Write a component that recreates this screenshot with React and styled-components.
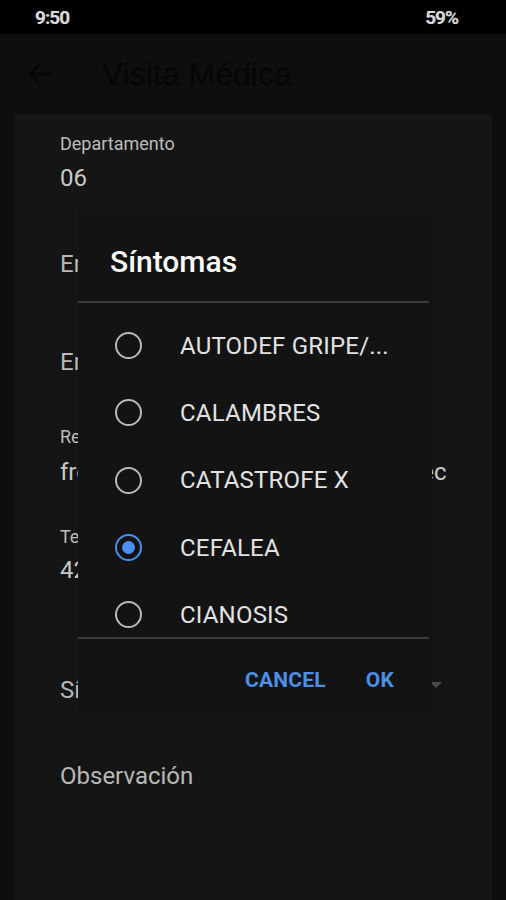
import React from "react";
import styled, { createGlobalStyle } from "styled-components";

const Global = createGlobalStyle`
  html, body { margin: 0; padding: 0; background: #0e0e0e; }
  body { font-family: Roboto, "Noto Sans", "Liberation Sans", sans-serif; }
  * { box-sizing: border-box; }
`;

const Screen = styled.div`
  position: relative;
  width: 506px;
  height: 900px;
  overflow: hidden;
  background: #0e0e0e;
  display: flex;
  flex-direction: column;
`;

const StatusBar = styled.div`
  height: 34px;
  background: #000;
  display: flex;
  align-items: center;
  justify-content: space-between;
  padding: 0 48px 0 35px;
  font-size: 19px;
  font-weight: 700;
  color: #d8d8d8;
  letter-spacing: -1px;
  text-shadow: 0 0 1px #555;
`;

const AppBar = styled.div`
  height: 80px;
  display: flex;
  align-items: center;
  padding-left: 27px;
  gap: 49px;
  background: #0e0e0e;
`;

const Title = styled.div`
  font-size: 32px;
  color: #060606;
  font-family: "Liberation Sans", Arial, sans-serif;
`;

const Card = styled.div`
  flex: 1;
  margin: 0 14px 0 15px;
  background: #151515;
  padding: 20px 0 0 45px;
  display: flex;
  flex-direction: column;
`;

const Field = styled.div`
  display: flex;
  flex-direction: column;
  gap: ${(p) => p.$gap ?? 8}px;
  margin-top: ${(p) => p.$top ?? 0}px;
  position: relative;
`;

const Label = styled.div`
  font-size: 18px;
  color: #bdbdbd;
  line-height: 20px;
`;

const Value = styled.div`
  font-size: 24px;
  color: #c8c8c8;
  line-height: 26px;
  white-space: nowrap;
`;

const Placeholder = styled.div`
  font-size: 24px;
  color: #b8b8b8;
  line-height: 26px;
  white-space: nowrap;
`;

const SelectRow = styled.div`
  display: flex;
  align-items: flex-start;
  justify-content: space-between;
  padding-right: 50px;
  margin-top: ${(p) => p.$top}px;
`;

const Caret = styled.div`
  width: 0;
  height: 0;
  margin-top: 5px;
  border-left: 6px solid transparent;
  border-right: 6px solid transparent;
  border-top: 6px solid #4a4a4a;
`;

const Dialog = styled.div`
  position: absolute;
  left: 78px;
  top: 210px;
  width: 354px;
  height: 505px;
  background: #131313;
  display: flex;
  flex-direction: column;
`;

const DialogTitle = styled.div`
  height: 91px;
  display: flex;
  align-items: center;
  padding: 12px 0 0 32px;
  font-size: 30px;
  font-weight: 500;
  color: #fafafa;
`;

const Divider = styled.div`
  height: 2px;
  margin-right: 3px;
  background: #3c3c3c;
`;

const List = styled.div`
  height: 334px;
  overflow: hidden;
  padding-top: 9px;
`;

const Item = styled.div`
  height: 67.3px;
  display: flex;
  align-items: center;
  padding-left: 37px;
  gap: 38px;
  font-size: 24px;
  color: #e2e2e2;
  letter-spacing: 0.2px;
  white-space: nowrap;
`;

const Radio = styled.div`
  width: 27px;
  height: 27px;
  flex: none;
  border-radius: 50%;
  border: 2.5px solid ${(p) => (p.$on ? "#4a90f0" : "#b9b9b9")};
  display: flex;
  align-items: center;
  justify-content: center;
  &::after {
    content: "";
    width: 13px;
    height: 13px;
    border-radius: 50%;
    background: #4a90f0;
    display: ${(p) => (p.$on ? "block" : "none")};
  }
`;

const Actions = styled.div`
  flex: 1;
  display: flex;
  align-items: flex-start;
  justify-content: flex-end;
  padding: 29px 38px 0 0;
  gap: 40px;
`;

const Action = styled.div`
  font-size: 21px;
  font-weight: 700;
  color: #4b8fe6;
  letter-spacing: 0.2px;
`;

const items = ["AUTODEF GRIPE/...", "CALAMBRES", "CATASTROFE X", "CEFALEA", "CIANOSIS", "CONVULSIONES"];

export default function App() {
  return (
    <>
      <Global />
      <Screen>
        <StatusBar>
          <span>9:50</span>
          <span>59%</span>
        </StatusBar>
        <AppBar>
          <svg width="26" height="22" viewBox="0 0 26 22">
            <path d="M24 11H3M12 2L3 11l9 9" fill="none" stroke="#060606" strokeWidth="2.6" />
          </svg>
          <Title>Visita Médica</Title>
        </AppBar>
        <Card>
          <Field $gap={11}>
            <Label>Departamento</Label>
            <Value>06</Value>
          </Field>
          <Field $top={60}>
            <Placeholder>Empresa</Placeholder>
          </Field>
          <Field $top={72}>
            <Placeholder>Empleado</Placeholder>
          </Field>
          <Field $top={52} $gap={12}>
            <Label>Responsable</Label>
            <Value>freddy.salazar@saludocupal.com.ec</Value>
          </Field>
          <Field $top={42} $gap={10}>
            <Label>Teléfono</Label>
            <Value>4235678</Value>
          </Field>
          <SelectRow $top={94}>
            <Placeholder>Síntomas</Placeholder>
            <Caret />
          </SelectRow>
          <Field $top={60}>
            <Placeholder>Observación</Placeholder>
          </Field>
        </Card>
        <Dialog>
          <DialogTitle>Síntomas</DialogTitle>
          <Divider />
          <List>
            {items.map((t) => (
              <Item key={t}>
                <Radio $on={t === "CEFALEA"} />
                {t}
              </Item>
            ))}
          </List>
          <Divider />
          <Actions>
            <Action>CANCEL</Action>
            <Action>OK</Action>
          </Actions>
        </Dialog>
      </Screen>
    </>
  );
}
